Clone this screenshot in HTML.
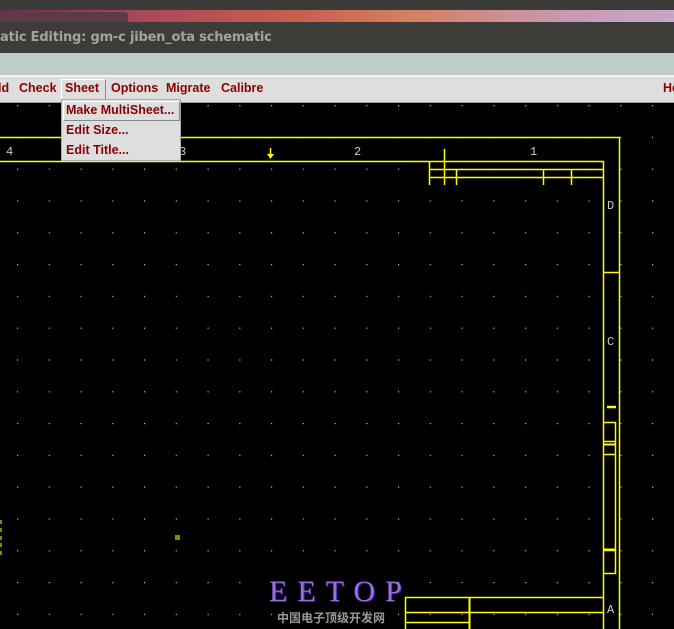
<!DOCTYPE html>
<html><head><meta charset="utf-8"><style>
body{margin:0;width:674px;height:629px;overflow:hidden;background:#000;position:relative;font-family:"Liberation Sans",sans-serif}
.a{position:absolute}
.menu span{position:absolute;top:81px;color:#8b0000;font-weight:bold;font-size:12.5px}
.dd span{position:absolute;left:4px;color:#8b0000;font-weight:bold;font-size:12.5px}
</style></head><body>
<div class="a" style="left:0;top:0;width:674px;height:10px;background:#3c3b37"></div>
<div class="a" style="left:0;top:10px;width:674px;height:14px;background:linear-gradient(90deg,#6e2a4a 0%,#a8475a 20%,#c8604e 45%,#d47f5f 60%,#c79ab6 85%,#c8a6c8 100%)"></div>
<div class="a" style="left:0;top:12px;width:128px;height:11px;background:#5a3a48;border-radius:0 4px 0 0"></div>
<div class="a" style="left:0;top:22px;width:674px;height:31px;background:#3e3c38"></div>
<div class="a" style="left:0;top:30px;color:#a6a39c;font-weight:bold;font-size:13px;font-family:'DejaVu Sans',sans-serif;letter-spacing:-0.2px">atic Editing: gm-c jiben_ota schematic</div>
<div class="a" style="left:0;top:53px;width:674px;height:22px;background:#bccdcc"></div>
<div class="a" style="left:0;top:75px;width:674px;height:2px;background:#f4f4f4"></div>
<div class="a" style="left:0;top:77px;width:674px;height:25px;background:#dedede;border-bottom:1px solid #999"></div>
<div class="a" style="left:61px;top:79px;width:43px;height:19px;border:1px solid #fff;border-right-color:#888;border-bottom-color:#888"></div>
<div class="menu"><span style="left:-2px">ld</span><span style="left:19px">Check</span><span style="left:65px">Sheet</span><span style="left:111px">Options</span><span style="left:166px">Migrate</span><span style="left:221px">Calibre</span><span style="left:663px">He</span></div>
<svg class="a" style="left:0;top:102px" width="674" height="527">
<defs><pattern id="g" x="17" y="3" width="31.75" height="31.8" patternUnits="userSpaceOnUse"><rect width="1.2" height="1.2" fill="#bbb"/></pattern></defs>
<rect width="674" height="527" fill="url(#g)"/>
<g stroke="#ffff00" stroke-width="1.5" fill="none" transform="translate(0,-102)">
<path d="M0 137.5H619.5V629M0 161.5H603.5V629"/>
<path d="M429.5 161V185M444.5 149V185M456.5 169V185M543.5 169V185M571.5 169V185M429 169.5H603M429 177.5H603"/>
<path d="M270.5 148V158M603 272.5H619"/>
<path d="M603 422.5H615.5V573.5H603M603 441.5H615M603 454.5H615M603 550.5H615"/>
<path d="M405.5 597.5H603M405.5 597V629M405 612.5H603M405 622.5H469"/>
<path d="M469.5 597V629" stroke-width="2"/>
<path d="M603 444.5H615M603 549.5H615" stroke-width="2"/>
<path d="M607 407H616" stroke-width="2.5"/>
</g>
<g fill="#ffff00" transform="translate(0,-102)"><path d="M267 154H274L270.5 159Z"/></g>
<g fill="#ccc" font-size="12" font-family="Liberation Mono,monospace" transform="translate(0,-102)">
<text x="6" y="155">4</text><text x="179" y="155">3</text><text x="354" y="155">2</text><text x="530" y="155">1</text>
<text x="607" y="209">D</text><text x="607" y="345">C</text><text x="607" y="613">A</text></g>
<g fill="#8a8a00" transform="translate(0,-102)"><rect x="0" y="520" width="2" height="4"/><rect x="0" y="528" width="2" height="4"/><rect x="0" y="536" width="2" height="4"/><rect x="0" y="543" width="2" height="4"/><rect x="0" y="551" width="2" height="4"/><rect x="175" y="535" width="5" height="5"/></g>
</svg>
<div class="a dd" style="left:61px;top:99px;width:118px;height:60px;background:#dedede;border:1px solid #aaa">
<div class="a" style="left:1px;top:1px;width:115px;height:18px;border:1px solid #fff;border-right-color:#888;border-bottom-color:#888"></div>
<span style="top:3px">Make MultiSheet...</span><span style="top:23px">Edit Size...</span><span style="top:43px">Edit Title...</span></div>
<div class="a" style="left:269px;top:575px;color:#9b6ee8;font-family:'Liberation Serif',serif;font-size:30px;letter-spacing:10px;text-shadow:1px 1px 0 #4b1fa0">EETOP</div>
<div class="a" style="left:277px;top:609px;color:#999;font-size:12px;font-family:'Noto Sans CJK SC',sans-serif;font-weight:bold">中国电子顶级开发网</div>
</body></html>
